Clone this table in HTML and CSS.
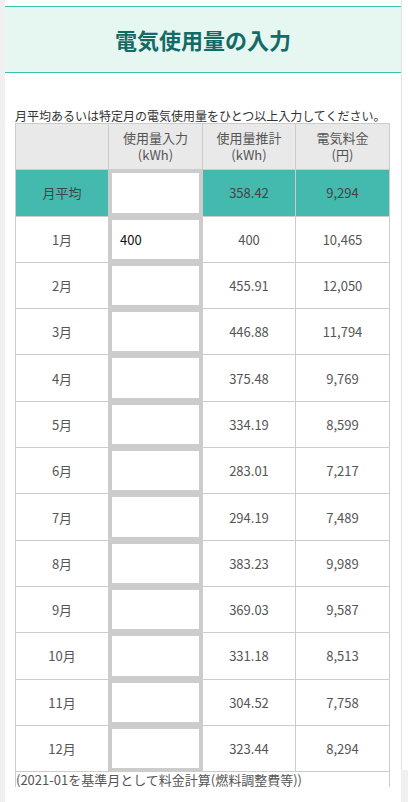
FILE: index.html
```html
<!DOCTYPE html>
<html lang="ja">
<head>
<meta charset="utf-8">
<title>電気使用量の入力</title>
<link rel="stylesheet" href="styles.css">
</head>
<body>
<div class="page">
  <main class="panel">
    <header class="hero"><h1 class="hero-title">電気使用量の入力</h1></header>
    <div class="content">
      <p class="intro">月平均あるいは特定月の電気使用量をひとつ以上入力してください。</p>
      <table class="usage">
        <colgroup>
          <col class="c1"><col class="c2"><col class="c3"><col class="c4">
        </colgroup>
        <thead>
          <tr><th></th><th>使用量入力<br>(kWh)</th><th>使用量推計<br>(kWh)</th><th>電気料金<br>(円)</th></tr>
        </thead>
        <tbody>
          <tr class="avg"><td>月平均</td><td class="in"><input class="kwh" type="text" value=""></td><td>358.42</td><td>9,294</td></tr>
          <tr><td>1月</td><td class="in"><input class="kwh" type="text" value="400"></td><td>400</td><td>10,465</td></tr>
          <tr><td>2月</td><td class="in"><input class="kwh" type="text" value=""></td><td>455.91</td><td>12,050</td></tr>
          <tr><td>3月</td><td class="in"><input class="kwh" type="text" value=""></td><td>446.88</td><td>11,794</td></tr>
          <tr><td>4月</td><td class="in"><input class="kwh" type="text" value=""></td><td>375.48</td><td>9,769</td></tr>
          <tr><td>5月</td><td class="in"><input class="kwh" type="text" value=""></td><td>334.19</td><td>8,599</td></tr>
          <tr><td>6月</td><td class="in"><input class="kwh" type="text" value=""></td><td>283.01</td><td>7,217</td></tr>
          <tr><td>7月</td><td class="in"><input class="kwh" type="text" value=""></td><td>294.19</td><td>7,489</td></tr>
          <tr><td>8月</td><td class="in"><input class="kwh" type="text" value=""></td><td>383.23</td><td>9,989</td></tr>
          <tr><td>9月</td><td class="in"><input class="kwh" type="text" value=""></td><td>369.03</td><td>9,587</td></tr>
          <tr><td>10月</td><td class="in"><input class="kwh" type="text" value=""></td><td>331.18</td><td>8,513</td></tr>
          <tr><td>11月</td><td class="in"><input class="kwh" type="text" value=""></td><td>304.52</td><td>7,758</td></tr>
          <tr><td>12月</td><td class="in"><input class="kwh" type="text" value=""></td><td>323.44</td><td>8,294</td></tr>
        </tbody>
        <tfoot>
          <tr class="note"><td colspan="4">(2021-01を基準月として料金計算(燃料調整費等))</td></tr>
        </tfoot>
      </table>
    </div>
  </main>
  <div class="track"></div>
</div>
</body>
</html>
```
FILE: styles.css
```css
html, body {
  margin: 0;
  padding: 0;
}
body {
  background: #f0f0f0;
  font-family: "Noto Sans CJK JP", "Noto Sans", sans-serif;
}
.page {
  display: flex;
  align-items: flex-start;
  height: 802px;
  padding-left: 5px;
  overflow: hidden;
}
.panel {
  width: 396px;
  height: 802px;
  background: #fff;
  padding-top: 6px;
  box-sizing: border-box;
}
.track {
  width: 7px;
  height: 770px;
  background: #fff;
  border-left: 1px solid #e3e3e3;
  box-sizing: border-box;
}
.hero {
  background: #e6f7f2;
  border-top: 1px solid #3dbfb1;
  border-bottom: 1px solid #3dbfb1;
}
.hero-title {
  margin: 0;
  height: 65px;
  line-height: 65px;
  text-align: center;
  font-size: 22px;
  font-weight: bold;
  color: #146a65;
}
.content {
  height: 714px;
  overflow: hidden;
  padding: 36px 0 0 10px;
  box-sizing: border-box;
}
.intro {
  margin: 0;
  font-size: 12px;
  line-height: 14px;
  color: #333;
  white-space: nowrap;
}
.usage {
  border-collapse: collapse;
  table-layout: fixed;
  width: 375px;
}
.c1 { width: 93px; }
.c2 { width: 94px; }
.c3 { width: 93px; }
.c4 { width: 94px; }
.usage tr {
  height: 46.3px;
}
.usage th,
.usage td {
  border: 1px solid #cccccc;
  padding: 0;
  text-align: center;
  vertical-align: middle;
  font-size: 13px;
  font-weight: normal;
  color: #555;
}
.usage th {
  background: #e9e9e9;
  line-height: 16.5px;
}
.usage .avg td {
  background: #44b9ae;
  color: #444;
}
.usage td.in {
  background: #fff;
}
.usage .avg td.in {
  background: #fff;
}
.kwh {
  display: block;
  width: 100%;
  height: 45.3px;
  box-sizing: border-box;
  margin: 0;
  border: 3px solid #cccccc;
  padding: 0 0 0 8px;
  background: #fff;
  font-family: "Noto Sans CJK JP", "Noto Sans", sans-serif;
  font-size: 13px;
  color: #111;
  outline: none;
}
.usage .note {
  height: auto;
}
.usage .note td {
  text-align: left;
  vertical-align: top;
  border-bottom: none;
  line-height: 15px;
  padding-top: 0;
  white-space: nowrap;
}
```
